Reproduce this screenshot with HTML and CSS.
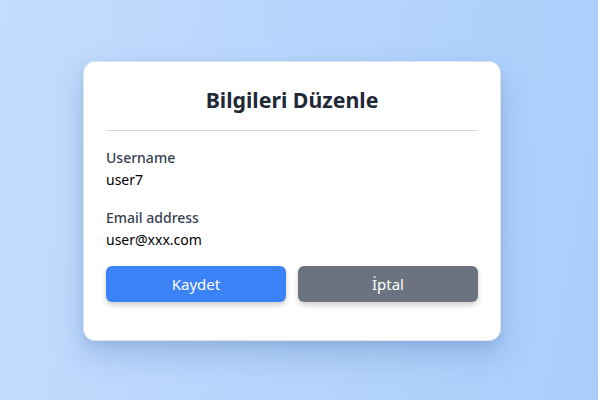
FILE: index.html
```html
<!DOCTYPE html>
<html lang="tr">
<head>
<meta charset="utf-8">
<title>Bilgileri Düzenle</title>
<link rel="stylesheet" href="styles.css">
</head>
<body>
<main class="page">
  <section class="card">
    <h1 class="title">Bilgileri Düzenle</h1>
    <hr class="divider">
    <div class="fields">
      <div class="field">
        <div class="label">Username</div>
        <div class="value">user7</div>
      </div>
      <div class="field">
        <div class="label">Email address</div>
        <div class="value">user@xxx.com</div>
      </div>
    </div>
    <div class="actions">
      <button class="btn btn-save" type="button">Kaydet</button>
      <button class="btn btn-cancel" type="button">İptal</button>
    </div>
  </section>
</main>
</body>
</html>
```

FILE: styles.css
```css
* { box-sizing: border-box; }
html, body { margin: 0; height: 100%; }
body {
  font-family: "Noto Sans", "Open Sans", sans-serif;
  background: linear-gradient(100deg, #c4ddfd 0%, #b6d5fc 50%, #a9cdfb 100%);
}
.page {
  height: 400px;
  display: flex;
  align-items: center;
  justify-content: center;
  padding: 2px 14px 0 0;
}
.card {
  width: 418px;
  background: #fff;
  border: 1px solid #dfe5ee;
  border-radius: 12px;
  padding: 24px 22px 38px;
  box-shadow: 0 14px 30px rgba(70, 110, 170, 0.28), 0 4px 8px rgba(70, 110, 170, 0.12);
}
.title {
  margin: 0;
  font-size: 21.3px;
  line-height: 28px;
  font-weight: 700;
  color: #1f2937;
  text-align: center;
}
.divider {
  margin: 16px 0 0;
  border: 0;
  border-top: 1px solid #d1d5db;
}
.fields {
  display: flex;
  flex-direction: column;
  gap: 18px;
  margin: 17px 0 16px;
}
.label {
  font-size: 14px;
  line-height: 20px;
  font-weight: 500;
  color: #374151;
  margin-bottom: 2px;
}
.value {
  font-size: 14px;
  line-height: 20px;
  color: #000;
}
.actions {
  display: flex;
  gap: 12px;
}
.btn {
  flex: 1;
  height: 36px;
  border: 0;
  border-radius: 6px;
  color: #fff;
  font-family: inherit;
  font-size: 15px;
  box-shadow: 0 4px 6px rgba(0, 0, 0, 0.12), 0 2px 4px rgba(0, 0, 0, 0.08);
}
.btn-save { background: #3b82f6; }
.btn-cancel { background: #6b7280; }
```
